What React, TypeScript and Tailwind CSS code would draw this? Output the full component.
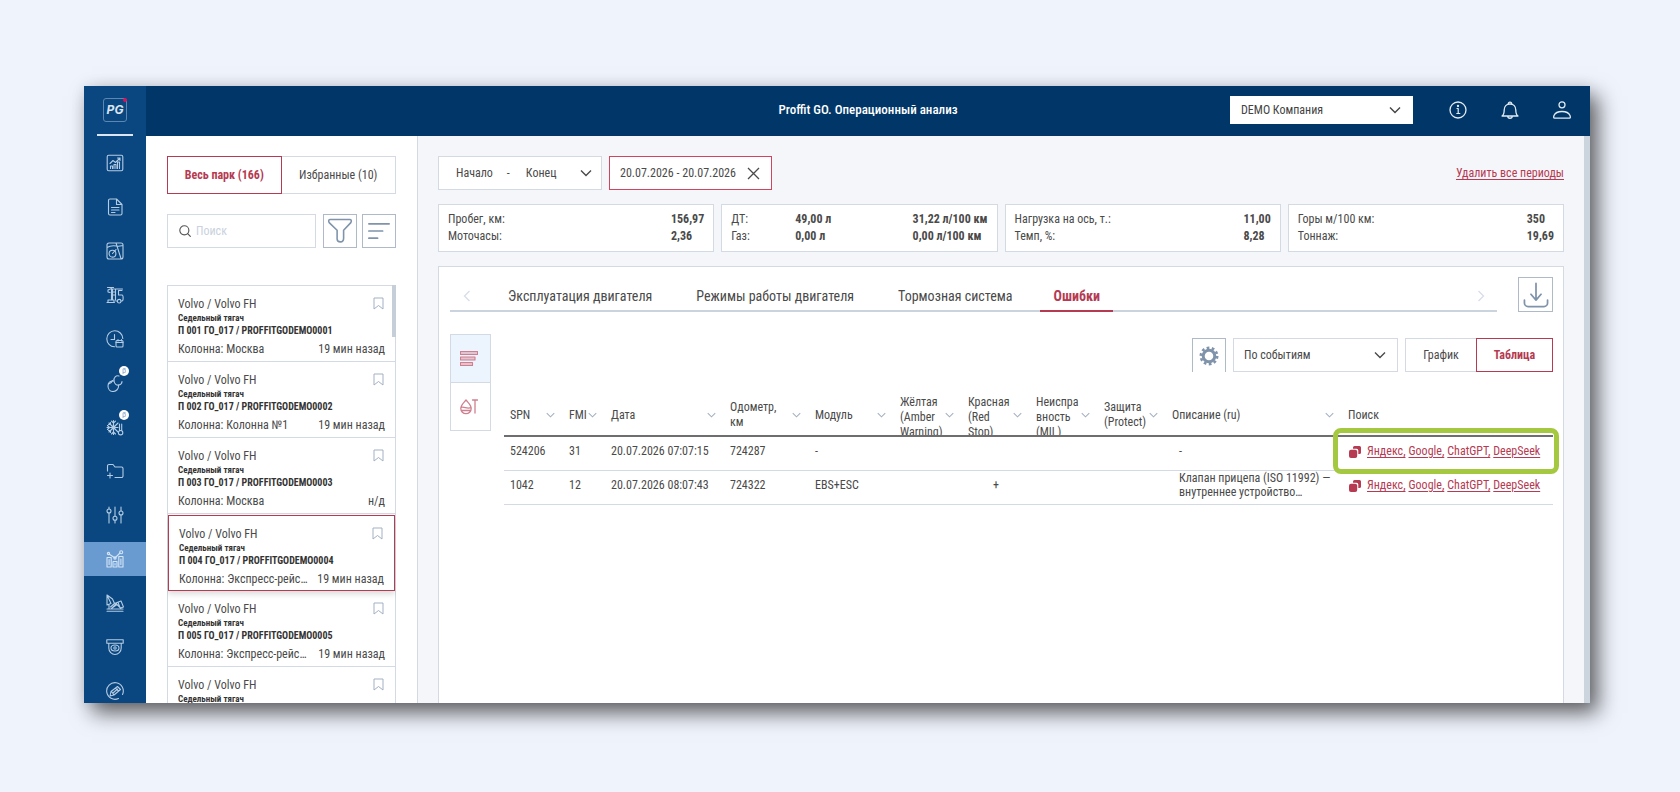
import type { ReactNode } from "react";
import clsx from "clsx";

function Svg({ size = 18, children, className }: { size?: number; children: ReactNode; className?: string }) {
  return (
    <svg
      width={size}
      height={size}
      viewBox="0 0 18 18"
      fill="none"
      stroke="currentColor"
      strokeWidth={1.1}
      strokeLinecap="round"
      strokeLinejoin="round"
      className={clsx("shrink-0", className)}
      aria-hidden="true"
    >
      {children}
    </svg>
  );
}

function Chevron({ className }: { className?: string }) {
  return (
    <svg width="12" height="8" viewBox="0 0 12 8" fill="none" stroke="currentColor" strokeWidth="1.4" className={clsx("shrink-0", className)} aria-hidden="true">
      <path d="M1 1.5 6 6.5 11 1.5" />
    </svg>
  );
}

const NAV: { label: string; icon: ReactNode; active?: boolean; beta?: boolean }[] = [
  {
    label: "Аналитика",
    icon: (
      <>
        <rect x="1.2" y="1.2" width="15.6" height="15.6" rx="1.5" />
        <path d="M4 9.5 7 6.5 9.5 8.5 14 4M11.5 4H14v2.5M4.5 14.5v-2.5h2v2.5M8 14.5v-4h2v4M11.5 14.5V8h2v6.5" />
      </>
    ),
  },
  {
    label: "Отчёты",
    icon: <path d="M10.500 1H4A1.500 1.500 0 0 0 2.500 2.500v13A1.500 1.500 0 0 0 4 17h10.500a1.500 1.500 0 0 0 1.500-1.500V6.500L10.500 1v5.500H16M5.500 9.500H13M5.500 12H13M5.500 14.500H9" />,
  },
  {
    label: "Топливо",
    icon: (
      <>
        <path d="M3 1h12A2 2 0 0 1 17 3v12a2 2 0 0 1-2 2H3a2 2 0 0 1-2-2V3A2 2 0 0 1 3 1ZM1 5.500C4 3.500 7 3.500 10.500 4M10 1l5 15.500M11 4.500 17 3.500" />
        <circle cx="6.500" cy="11.700" r="3.400" />
        <path d="m10 7.500-3.500 4" />
      </>
    ),
  },
  {
    label: "Маршруты",
    icon: (
      <>
        <path d="M2 4 5.500 2.500V14M2 4v2l2 .5M1 16.500h7.500M2 16.500V14h6v2.500M6.500 3h3v11M6.500 3v11M7 6h2M7 9h2M9.500 3h7M16 4.500h-3.500V9H16c1.500 0 1.500 6 0 6h-1M10 15h1.500" />
        <circle cx="13.200" cy="15.200" r="1.800" />
        <path d="M1.500 1.500h6" />
      </>
    ),
  },
  {
    label: "Время работы",
    icon: (
      <>
        <path d="M8.500 16.800A8 8 0 1 1 16.800 8.500M8.500 4.500V9.500H5" />
        <rect x="10" y="10.500" width="7" height="6.500" rx="1" />
        <path d="M10 12.500h7M12 9.500v1.500M15.500 9.500v1.500" />
      </>
    ),
  },
  {
    label: "Инциденты",
    beta: true,
    icon: (
      <>
        <path d="M8 7c-4-.5-6 2-6 5s2 5.500 5 5.500 6-2.500 5.500-6.500" />
        <path d="M8 7c-.5-3.500 2-6 5-5M8 7c.5 3 2.500 4.500 5 4 2-.5 3-2 3-3.500M2.500 10C4.500 9.500 6 8 6.500 6.500" />
      </>
    ),
  },
  {
    label: "Климат",
    beta: true,
    icon: (
      <>
        <circle cx="7.500" cy="9.500" r="1.500" />
        <path d="M7.500 2.500v14M1 9.500h11M3 5l9 9M12 5l-9 9M5.500 3.200l2 1.800 2-1.800M5.500 16 7.500 14l2 2M1.500 7.500l2 2-2 2M4.500 4.500v2h-2M2.500 12.500h2v2M13.500 6v6.500M15.700 6v6.500" />
        <circle cx="14.600" cy="14.700" r="2.200" />
      </>
    ),
  },
  {
    label: "Обмен данными",
    icon: <path d="M1.500 9V4A1.500 1.500 0 0 1 3 2.500h4l2 2.500h6.500A1.500 1.500 0 0 1 17 6.500v7.500a1.500 1.500 0 0 1-1.500 1.500H9M1.500 13.500h5M4 11v5" />,
  },
  {
    label: "Настройки",
    icon: (
      <>
        <path d="M3 1v2M3 7v10M9 1v9M9 14.500v2.500M15 1v4M15 9v8" />
        <circle cx="3" cy="5" r="2" />
        <circle cx="9" cy="12.200" r="2" />
        <circle cx="15" cy="7" r="2" />
      </>
    ),
  },
  {
    label: "Операционный анализ",
    active: true,
    icon: (
      <>
        <path d="M1 7.500h4.200V17H1ZM7 11.500h4V17H7ZM12.800 6.500H17V17h-4.200ZM3.100 9.500v5M9 13.500v1.500M14.900 9v5.500" />
        <path d="m3 4 6 4 5-5" />
        <circle cx="2.500" cy="3.500" r="1.100" />
        <circle cx="9" cy="8" r="1.100" />
        <circle cx="15.200" cy="2.300" r="1.500" />
      </>
    ),
  },
  {
    label: "Спецтехника",
    icon: <path d="M1 1v10l4-1.500L1 1l5.500 4 2 4.500L4.500 13M8.500 9.500 15 7l2.500 6-3 1-3.500-3.500-5 3.500M1 15h16M1 17.200h16M5.500 14.500l5-5M12 8.500l2 5M3 11v3.500" />,
  },
  {
    label: "Видеонаблюдение",
    icon: (
      <>
        <path d="M.8 1.800h16.400v3.500H.8ZM2.800 5.500V10c0 3.800 3 6.500 6.200 6.500s6.200-2.700 6.200-6.500V5.500" />
        <ellipse cx="9" cy="10" rx="4" ry="3" />
        <circle cx="9" cy="10" r="1.200" />
      </>
    ),
  },
  {
    label: "Журнал",
    icon: (
      <>
        <path d="M12.500 16.500A8.300 8.300 0 1 1 16.500 12.500" />
        <path d="m4 14 1-4.500 6.500-5 3 3-6.500 5.500L4 14ZM9.500 6l3 3M5.500 9.500 8 13M7 11l4.500-4" />
      </>
    ),
  },
];

const VEHICLES = [
  { id: "001", group: "Москва", seen: "19 мин назад" },
  { id: "002", group: "Колонна №1", seen: "19 мин назад" },
  { id: "003", group: "Москва", seen: "н/д" },
  { id: "004", group: "Экспресс-рейс…", seen: "19 мин назад", selected: true },
  { id: "005", group: "Экспресс-рейс…", seen: "19 мин назад" },
  { id: "006", group: "Москва", seen: "19 мин назад" },
];

const COLUMNS = [
  { title: "SPN", width: "w-[59px]" },
  { title: "FMI", width: "w-[42px]" },
  { title: "Дата", width: "w-[119px]" },
  { title: "Одометр, км", width: "w-[85px]" },
  { title: "Модуль", width: "w-[85px]" },
  { title: "Жёлтая (Amber Warning)", width: "w-[68px]" },
  { title: "Красная (Red Stop)", width: "w-[68px]" },
  { title: "Неисправность (MIL)", width: "w-[68px]" },
  { title: "Защита (Protect)", width: "w-[68px]" },
  { title: "Описание (ru)", width: "w-[176px]" },
  { title: "Поиск", width: "" },
];

const ERRORS = [
  { spn: "524206", fmi: "31", date: "20.07.2026 07:07:15", odo: "724287", module: "-", red: "", text: "-", marked: true },
  { spn: "1042", fmi: "12", date: "20.07.2026 08:07:43", odo: "724322", module: "EBS+ESC", red: "+", text: "Клапан прицепа (ISO 11992) — внутреннее устройство…", marked: false },
];

const LINKS = ["Яндекс,", "Google,", "ChatGPT,", "DeepSeek"];

function Sidebar() {
  return (
    <nav className="flex w-[62px] shrink-0 flex-col bg-[#0a4780] text-[#b4cce3]" aria-label="Разделы">
      <div className="relative flex h-[50px] shrink-0 items-center justify-center pb-[2px]">
        <span className="relative flex size-6 items-center justify-center rounded-[3px] border border-[#5e87b0] font-[Inter] text-xs font-bold italic leading-none text-[#dbe6f1]">
          PG
          <i className="absolute -right-px -top-px size-1 rounded-full bg-[#d8125a]" />
        </span>
        <i className="absolute inset-x-[13px] bottom-0 h-[2px] bg-[#dbe6f1]" />
      </div>
      <ul className="pt-[5px]">
        {NAV.map((item) => (
          <li key={item.label} className="flex h-11 items-center">
            <a
              href="#"
              aria-label={item.label}
              className={clsx("relative flex h-[34px] w-full items-center justify-center", item.active && "bg-[#6a9bd0] text-[#d3e5f7]")}
            >
              <Svg>{item.icon}</Svg>
              {item.beta && (
                <span className="absolute left-[35px] top-0 flex size-[10px] items-center justify-center rounded-full bg-white text-[8px] leading-none text-[#7fa3c7]">β</span>
              )}
            </a>
          </li>
        ))}
      </ul>
    </nav>
  );
}

function Header() {
  return (
    <header className="grid h-[50px] shrink-0 grid-cols-[1fr_auto_1fr] items-center bg-[#003768] pb-[2px] text-white">
      <span />
      <h1 className="text-[13px] font-medium">Proffit GO. Операционный анализ</h1>
      <div className="flex items-center justify-end gap-[34px] pr-[19px]">
        <label className="relative mr-[2px] block w-[183px]">
          <span className="sr-only">Компания</span>
          <select className="h-7 w-full appearance-none bg-white pl-[11px] text-xs text-[#444]">
            <option>DEMO Компания</option>
          </select>
          <Chevron className="absolute right-3 top-[10px] text-[#444]" />
        </label>
        <button type="button" aria-label="Информация">
          <Svg className="text-[#e4ecf4]">
            <circle cx="9" cy="9" r="8" strokeWidth="1.300" />
            <path d="M8 7.500h1.200v5M7.800 12.500h3" strokeWidth="1.200" />
            <circle cx="9" cy="5" r=".6" fill="currentColor" />
          </Svg>
        </button>
        <button type="button" aria-label="Уведомления">
          <Svg className="text-[#e4ecf4]">
            <path d="M1 15h16c-1.500-1-2.200-3-2.200-6C14.800 5.500 12.500 3 9 3S3.200 5.500 3.200 9c0 3-.7 5-2.200 6ZM6.800 15.500c0 2.300 4.400 2.300 4.400 0M7.300 3c0-2.600 3.400-2.600 3.400 0" strokeWidth="1.300" />
          </Svg>
        </button>
        <button type="button" aria-label="Профиль">
          <Svg className="text-[#e4ecf4]">
            <circle cx="9" cy="3.800" r="3" strokeWidth="1.300" />
            <path d="M1.500 17.200c-1 0-1-1.500-.5-2.700 1.500-3.500 4.500-4 8-4s6.500.5 8 4c.5 1.200.5 2.700-.5 2.700Z" strokeWidth="1.300" />
          </Svg>
        </button>
      </div>
    </header>
  );
}

function Fleet() {
  return (
    <aside className="flex w-[272px] shrink-0 flex-col border-r border-[#d3dae3] bg-white px-[21px] pt-5">
      <div className="grid shrink-0 grid-cols-2">
        <button type="button" className="h-[38px] border border-[#b53a52] font-bold text-[#b53a52]">Весь парк (166)</button>
        <button type="button" className="h-[38px] border border-l-0 border-[#d3dae3]">Избранные (10)</button>
      </div>
      <div className="mt-5 flex shrink-0 gap-[5px]">
        <label className="mr-[2px] flex h-[34px] min-w-0 flex-1 items-center gap-[5px] border border-[#d3dae3] pl-[11px]">
          <Svg size={12} className="text-[#555]">
            <circle cx="8" cy="8" r="6.800" strokeWidth="1.700" />
            <path d="m13 13 4 4" strokeWidth="1.700" />
          </Svg>
          <input type="text" placeholder="Поиск" aria-label="Поиск" className="w-full min-w-0 outline-none placeholder:text-[#c9d2de]" />
        </label>
        <button type="button" aria-label="Фильтр" className="flex size-[34px] items-center justify-center border border-[#aebac8] text-[#7f93aa]">
          <Svg size={26}>
            <path d="M2 1h14c1 0 1 1.500.500 2.200L11.500 8.500V14c0 1.500-1 2.500-2.200 2.500S7 16 7 14.500v-6L1.500 3.200C1 2.500 1 1 2 1Z" />
          </Svg>
        </button>
        <button type="button" aria-label="Сортировка" className="flex size-[34px] items-center justify-center border border-[#aebac8] text-[#7f93aa]">
          <Svg size={26}>
            <path d="M2 4h14M2 9h9.500M2 14h6" strokeWidth="1.200" />
          </Svg>
        </button>
      </div>
      <div className="relative mt-[37px] min-h-0 flex-1 overflow-hidden">
        <ul className="border border-[#d3dae3]">
          {VEHICLES.map((v) => (
            <li
              key={v.id}
              className={clsx(
                "flex h-[76px] flex-col border-b px-[10px] pt-[10px]",
                v.selected ? "relative mt-px border border-[#b53a52] shadow-[0_3px_6px_rgba(0,0,0,0.15)]" : "border-[#d3dae3]",
              )}
            >
              <div className="flex items-start justify-between leading-4">
                <span className="text-xs leading-4">Volvo / Volvo FH</span>
                <button type="button" aria-label="В избранное" className="pr-px pt-px text-[#a3b1c2]">
                  <svg width="11" height="13" viewBox="0 0 11 13" fill="none" stroke="currentColor">
                    <path d="M1 1h9v11L5.500 8.500 1 12Z" />
                  </svg>
                </button>
              </div>
              <p className="text-[9px] font-bold leading-3 text-[#333]">Седельный тягач</p>
              <p className="text-[10px] font-bold leading-[13px] text-[#333]">П {v.id} ГО_017 / PROFFITGODEMO0{v.id}</p>
              <p className="mt-1 flex justify-between gap-2 text-xs leading-4">
                <span>Колонна: {v.group}</span>
                <span>{v.seen}</span>
              </p>
            </li>
          ))}
        </ul>
        <i className="absolute right-0 top-0 h-[52px] w-1 bg-[#c6ced9]" />
      </div>
    </aside>
  );
}

function Stats() {
  const card = "flex h-12 justify-between border border-[#d3dae3] bg-white px-[9px] pt-[6px] leading-[17px]";
  return (
    <section className="mt-[14px] grid shrink-0 grid-cols-4 gap-[7px]">
      <div className={card}>
        <p>Пробег, км:<br />Моточасы:</p>
        <p className="font-bold">156,97<br />2,36</p>
      </div>
      <div className={card}>
        <div className="flex">
          <p className="w-16">ДТ:<br />Газ:</p>
          <p className="font-bold">49,00 л<br />0,00 л</p>
        </div>
        <p className="font-bold">31,22 л/100 км<br />0,00 л/100 км</p>
      </div>
      <div className={card}>
        <p>Нагрузка на ось, т.:<br />Темп, %:</p>
        <p className="font-bold">11,00<br />8,28</p>
      </div>
      <div className={card}>
        <p>Горы м/100 км:<br />Тоннаж:</p>
        <p className="font-bold">350<br />19,69</p>
      </div>
    </section>
  );
}

function ErrorTable() {
  return (
    <table className="mt-[23px] w-full table-fixed border-collapse text-left">
      <thead>
        <tr className="border-b-2 border-[#6e6e6e]">
          {COLUMNS.map((c, i) => (
            <th key={c.title} scope="col" className={clsx("p-0 font-normal", c.width)}>
              <div className="flex h-10 items-center justify-between overflow-hidden pl-[6px] pr-2">
                <span className={clsx("max-h-10 leading-[15px]", i >= 5 && i < 8 && "w-[44px] break-words", i === 3 && "w-12")}>
                  {c.title}
                </span>
                {i < 10 && <Chevron className="w-[9px] text-[#a3b1c2]" />}
              </div>
            </th>
          ))}
        </tr>
      </thead>
      <tbody>
        {ERRORS.map((e) => (
          <tr key={e.spn} className="h-[34px] border-b border-[#d3dae3] [&>td]:pb-[5px]">
            <td className="pl-[6px]">{e.spn}</td>
            <td className="pl-[6px]">{e.fmi}</td>
            <td className="pl-[6px]">{e.date}</td>
            <td className="pl-[6px]">{e.odo}</td>
            <td className="pl-[6px]">{e.module}</td>
            <td />
            <td className="text-center">{e.red}</td>
            <td />
            <td />
            <td className="pl-[13px]">
              <p className="w-[156px] leading-[14px]">{e.text}</p>
            </td>
            <td className="relative pl-[7px]">
              <div className="flex items-center gap-[6px]">
                <svg width="12" height="12" viewBox="0 0 12 12" className="mt-[2px] shrink-0 text-[#b53a52]" aria-hidden="true">
                  <path d="M5.500 0h5A1.500 1.500 0 0 1 12 1.500v5A1.500 1.500 0 0 1 10.500 8H9.300V4.500A1.800 1.800 0 0 0 7.500 2.700H4V1.500A1.500 1.500 0 0 1 5.500 0Z" fill="currentColor" />
                  <rect y="3.800" width="8.200" height="8.200" rx="2" fill="currentColor" />
                </svg>
                <span className="flex gap-[3px] text-[#b53a52]">
                  {LINKS.map((l) => (
                    <a key={l} href="#" className="underline underline-offset-2">{l}</a>
                  ))}
                </span>
              </div>
              {e.marked && <i className="pointer-events-none absolute -bottom-1 -left-[9px] -right-[6px] -top-[9px] rounded-lg border-[5px] border-[#a4c940]" />}
            </td>
          </tr>
        ))}
      </tbody>
    </table>
  );
}

function Report() {
  return (
    <section className="mt-[14px] min-h-0 flex-1 border border-b-0 border-[#d3dae3] bg-white pl-[11px] pr-[10px] pt-[10px]">
      <div className="flex items-end justify-between">
        <div className="flex h-[34px] flex-1 items-stretch border-b-2 border-[#cbd3df] pt-1 text-sm">
          <button type="button" aria-label="Назад" className="w-[33px] text-[#d9dfe8]">
            <Chevron className="mx-auto rotate-90" />
          </button>
          <div role="tablist" className="ml-[9px] flex flex-1 gap-3">
            {["Эксплуатация двигателя", "Режимы работы двигателя", "Тормозная система"].map((t) => (
              <button key={t} type="button" role="tab" className="px-4">{t}</button>
            ))}
            <button type="button" role="tab" aria-selected="true" className="relative px-[13px] font-bold text-[#b53a52]">
              Ошибки
              <i className="absolute inset-x-0 -bottom-[2px] h-[2px] bg-[#b53a52]" />
            </button>
          </div>
          <button type="button" aria-label="Вперёд" className="w-[33px] text-[#d9dfe8]">
            <Chevron className="mx-auto -rotate-90" />
          </button>
        </div>
        <button type="button" aria-label="Скачать" className="ml-[21px] flex size-[35px] items-center justify-center border border-[#aebac8] text-[#7f93aa]">
          <Svg size={26}>
            <path d="M9 1v11.500M5.500 8.500 9 12.500l3.500-4M1 12.500v2A2.500 2.500 0 0 0 3.500 17h11a2.500 2.500 0 0 0 2.500-2.500v-2" strokeWidth="1.200" />
          </Svg>
        </button>
      </div>
      <div className="mt-[22px] flex items-start gap-[13px]">
        <div className="w-[41px] shrink-0 border border-[#d3dae3] text-[#cf7f8e]">
          <button type="button" aria-label="Строки" className="flex h-12 w-full items-center justify-center border-b border-[#d3dae3] bg-[#ecf4fd] pr-1">
            <Svg>
              <path d="M.500 1.500h17v3H.500ZM.500 7h14.500v3H.500ZM.500 12.500h12v3H.500Z" fill="#e2c3cf" />
            </Svg>
          </button>
          <button type="button" aria-label="Температура" className="flex h-[47px] w-full items-center justify-center pr-1">
            <Svg>
              <path d="M6 2C3.500 5 .8 7 .8 10.500a5.200 5.200 0 0 0 10.400 0C11.200 7 8.500 5 6 2ZM1 9.500c3-1.500 6 2 10 0M2 12.500h8M12.500 2h5M15 2v13" strokeWidth="1.300" />
            </Svg>
          </button>
        </div>
        <div className="min-w-0 flex-1 pt-1">
          <div className="flex justify-end">
            <button type="button" aria-label="Параметры" className="flex size-[34px] items-center justify-center border border-b-0 border-[#aebac8] text-[#7f93aa]">
              <svg width="20" height="20" viewBox="0 0 20 20" fill="none" stroke="currentColor" aria-hidden="true">
                <circle cx="10" cy="10" r="5.800" strokeWidth="3" />
                <circle cx="10" cy="10" r="8.200" strokeWidth="2.600" strokeDasharray="2.700 2.450" />
              </svg>
            </button>
            <label className="relative ml-[7px] block w-[165px]">
              <span className="sr-only">Группировка</span>
              <select className="h-[34px] w-full appearance-none border border-[#d3dae3] pl-[10px]">
                <option>По событиям</option>
              </select>
              <Chevron className="absolute right-3 top-[13px]" />
            </label>
            <button type="button" className="ml-[7px] h-[34px] w-[71px] border border-r-0 border-[#d3dae3]">График</button>
            <button type="button" className="h-[34px] w-[77px] border border-[#b53a52] font-bold text-[#b53a52]">Таблица</button>
          </div>
          <ErrorTable />
        </div>
      </div>
    </section>
  );
}

export default function App() {
  return (
    <div className="flex h-screen bg-[#eff3fc] pb-[89px] pl-[84px] pr-[90px] pt-[86px] font-['Roboto_Condensed',Roboto,sans-serif] text-xs text-[#4a4a4a]">
      <div className="flex min-w-0 flex-1 shadow-[8px_10px_20px_rgba(0,0,0,0.6),0_0_14px_rgba(0,0,0,0.08)]">
        <div className="flex min-w-0 flex-1 overflow-hidden">
          <Sidebar />
          <div className="flex min-w-0 flex-1 flex-col">
            <Header />
            <div className="flex min-h-0 flex-1">
              <Fleet />
              <main className="flex min-w-0 flex-1 flex-col border-r-[6px] border-[#ccd4de] bg-[#f5f6fa] px-5 pt-5">
                <div className="flex shrink-0 items-center gap-[7px]">
                  <button type="button" className="flex h-[34px] w-[164px] items-center border border-[#d3dae3] bg-white pl-[17px] pr-[9px]">
                    <span>Начало</span>
                    <span className="ml-[14px]">-</span>
                    <span className="ml-4">Конец</span>
                    <Chevron className="ml-auto" />
                  </button>
                  <button type="button" className="flex h-[34px] w-[163px] items-center justify-between border border-[#d0445f] bg-white pl-[10px] pr-[11px]">
                    <span>20.07.2026 - 20.07.2026</span>
                    <svg width="13" height="13" viewBox="0 0 13 13" stroke="currentColor" strokeWidth="1.300" aria-hidden="true">
                      <path d="m1 1 11 11M12 1 1 12" />
                    </svg>
                  </button>
                  <a href="#" className="ml-auto text-[#b53a52] underline underline-offset-2">Удалить все периоды</a>
                </div>
                <Stats />
                <Report />
              </main>
            </div>
          </div>
        </div>
      </div>
    </div>
  );
}
